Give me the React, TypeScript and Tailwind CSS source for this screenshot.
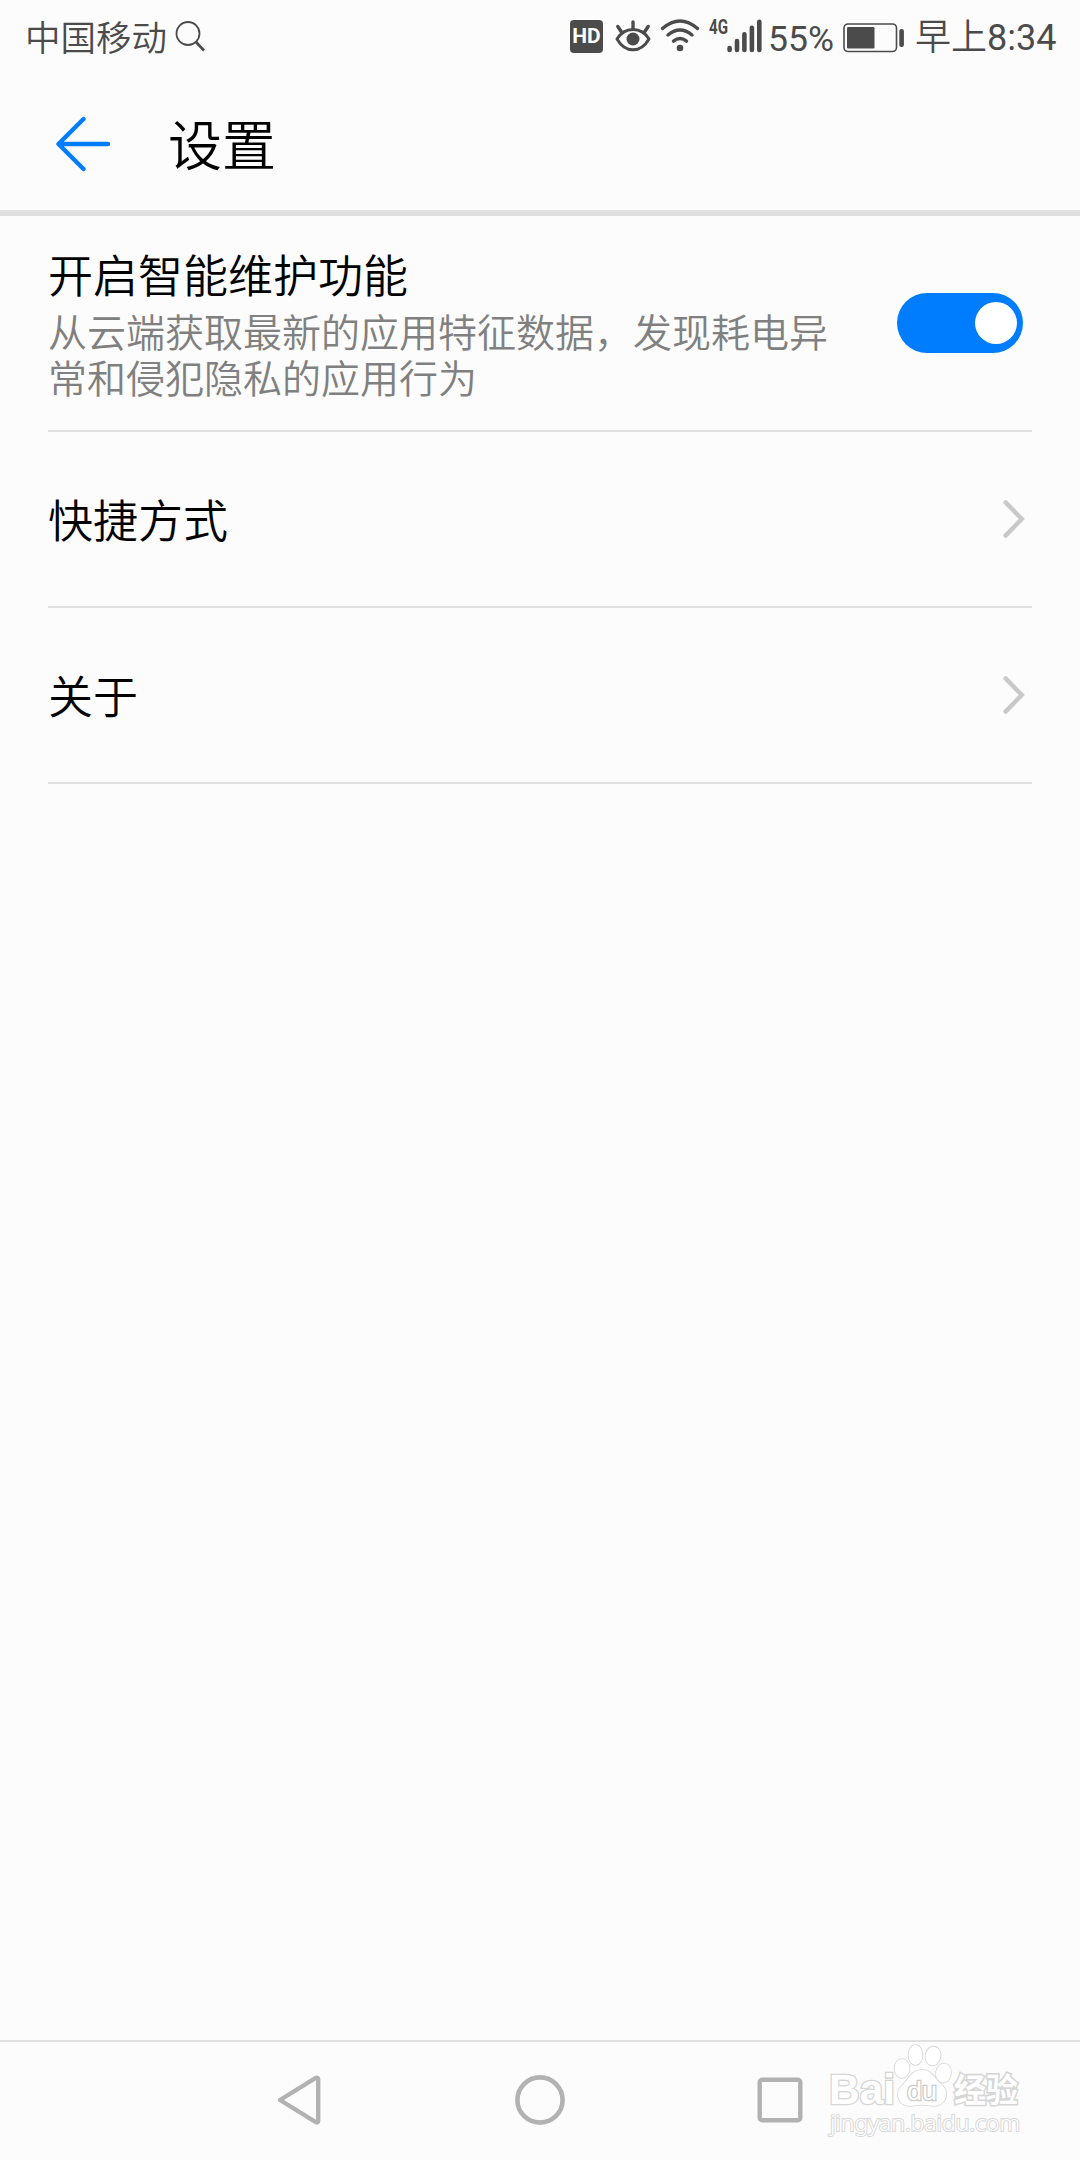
import React, { useState } from 'react';

const SearchIcon = () => (
    <svg className="w-[32px] h-[34px]" viewBox="0 0 32 34" fill="none" stroke="#4b4b4b">
        <circle cx="14" cy="14.5" r="11.5" strokeWidth="1.8" />
        <path d="M22 23 L30 31.5" strokeWidth="2.6" />
    </svg>
);

const HdIcon = () => (
    <div className="w-[33px] h-[33px] rounded-[4px] bg-[#4b4b4b] flex items-center justify-center">
        <span className="font-['Roboto',sans-serif] font-bold text-[21px] leading-none text-white pt-px">HD</span>
    </div>
);

const EyeIcon = () => (
    <svg className="w-[36px] h-[32px]" viewBox="0 0 36 32" fill="none" stroke="#4b4b4b" strokeWidth="3.4" strokeLinecap="round">
        <path d="M2 19 C6 12.5 12 9.5 18 9.5 C24 9.5 30 12.5 34 19 C30 26 24 29.8 18 29.8 C12 29.8 6 26 2 19 Z" strokeWidth="3" strokeLinejoin="round" />
        <circle cx="18" cy="19" r="6.5" fill="#4b4b4b" stroke="none" />
        <path d="M18 2 V9 M2.8 6.5 L6.5 12 M33.2 6.5 L29.5 12" />
    </svg>
);

const WifiIcon = () => (
    <svg className="w-[40px] h-[34px]" viewBox="0 0 40 34" fill="none" stroke="#4b4b4b" strokeWidth="3.4" strokeLinecap="round">
        <path d="M2.5 9.5 Q20 -5.5 37.5 9.5" />
        <path d="M8 16 Q20 6 32 16" />
        <path d="M13.5 22.2 Q20 17 26.5 22.2" />
        <circle cx="20" cy="29" r="3.3" fill="#4b4b4b" stroke="none" />
    </svg>
);

const SignalIcon = () => (
    <div className="flex items-start h-[34px]">
        <span className="w-[18px] font-['Roboto',sans-serif] font-bold text-[21px] leading-[16px] text-[#4b4b4b]">
            <span className="inline-block origin-left scale-x-[0.72]">4G</span>
        </span>
        <svg className="w-[35px] h-[34px]" viewBox="0 0 35 34" stroke="#4b4b4b" strokeWidth="4.6" strokeLinecap="round">
            <path d="M2.6 29 V31 M10 22 V31 M17.4 15.2 V31 M24.9 8.7 V31 M32.3 2.7 V31" />
        </svg>
    </div>
);

const BatteryIcon = () => (
    <svg className="w-[62px] h-[30px]" viewBox="0 0 62 30" fill="#4b4b4b">
        <rect x="1" y="1" width="52.5" height="27.5" rx="4" fill="none" stroke="#4b4b4b" strokeWidth="1.6" />
        <rect x="4" y="4" width="27.5" height="21.5" rx="1.2" />
        <rect x="56.3" y="6" width="4.6" height="18" rx="2" />
    </svg>
);

const BackArrow = () => (
    <svg className="w-[56px] h-[56px]" viewBox="0 0 56 56" fill="none" stroke="#007dff" strokeWidth="4.4" strokeLinecap="round" strokeLinejoin="round">
        <path d="M28.5 3 L3.5 28 L28.5 53 M4 28 H53" />
    </svg>
);

const Chevron = () => (
    <svg className="w-[24px] h-[40px]" viewBox="0 0 24 40" fill="none" stroke="#c9c9c9" strokeWidth="4.4" strokeLinecap="round" strokeLinejoin="miter">
        <path d="M3.6 3.4 L19.8 20 L3.6 36.6" />
    </svg>
);

const Watermark = () => (
    <svg className="absolute left-[822px] top-0 w-[210px] h-[100px]" viewBox="0 0 210 100" fill="#ffffff" stroke="#d6d6d6" strokeWidth="1.6" paintOrder="stroke">
        <text x="7" y="61.5" fontFamily="Liberation Sans" fontWeight="700" fontSize="42" strokeWidth="2.6" textLength="66" lengthAdjust="spacingAndGlyphs">Bai</text>
        <text x="132" y="60" fontFamily="Noto Sans CJK SC" fontWeight="700" fontSize="33" strokeWidth="3.2" textLength="64" lengthAdjust="spacingAndGlyphs">经验</text>
        <text x="8" y="88.5" fontFamily="Noto Sans" fontSize="21.5" stroke="#d9d9d9" strokeWidth="2" textLength="190" lengthAdjust="spacingAndGlyphs">jingyan.baidu.com</text>
        <ellipse cx="80" cy="26.5" rx="7.5" ry="9.5" />
        <ellipse cx="93.5" cy="13" rx="7" ry="10" />
        <ellipse cx="111" cy="14" rx="7.5" ry="9.5" transform="rotate(10 111 14)" />
        <ellipse cx="121.5" cy="31" rx="7.5" ry="9.5" transform="rotate(8 121.5 31)" />
        <path d="M100 28 C109 28 111 34 116 39 C121 44 125 47 124 54 C123 62 115 65 108 63.5 C103 62.5 97 62.5 92 63.5 C84 65 77 62 76 54 C75 47 80 44 84 39 C89 33 92 28 100 28 Z" />
        <text x="85" y="57.5" fontFamily="Liberation Sans" fontSize="26" stroke="#cacaca" strokeWidth="2.4" textLength="30" lengthAdjust="spacingAndGlyphs">du</text>
    </svg>
);

const links = ['快捷方式', '关于'];

export default function App() {
    const [enabled, setEnabled] = useState(true);

    return (
        <div className="w-[1080px] h-[2160px] flex flex-col bg-[#fcfcfc] text-black font-['Noto_Sans_CJK_SC',sans-serif] font-[350] overflow-hidden">
            {/* status bar */}
            <div className="h-[72px] shrink-0 flex items-center justify-between pl-[25px] pr-[23px] text-[#4b4b4b]">
                <div className="flex items-center">
                    <span className="w-[149px] text-[35.5px] leading-[72px] whitespace-nowrap">中国移动</span>
                    <SearchIcon />
                </div>
                <div className="flex items-center">
                    <HdIcon />
                    <div className="ml-[12px]"><EyeIcon /></div>
                    <div className="ml-[9px]"><WifiIcon /></div>
                    <div className="ml-[9px]"><SignalIcon /></div>
                    <span className="ml-[6px] w-[75px] font-['Roboto',sans-serif] font-normal text-[35.5px] leading-[70px] pt-[5px]">55%</span>
                    <div className="pt-[3px]"><BatteryIcon /></div>
                    <span className="ml-[10px] w-[142px] font-['Roboto','Noto_Sans_CJK_SC',sans-serif] text-[36px] font-normal leading-[70px] pt-[4px] whitespace-nowrap">
                        <span className="font-[350]">早上</span>8:34
                    </span>
                </div>
            </div>

            {/* title bar */}
            <header className="h-[144px] shrink-0 flex items-center pl-[55px] border-b-[6px] border-[#e0e0e0]">
                <button className="mt-[6px]"><BackArrow /></button>
                <h1 className="ml-[57px] mt-[4px] text-[54px] leading-[72px]">设置</h1>
            </header>

            <main className="flex-1 px-[48px]">
                <div className="h-[216px] flex items-center justify-between border-b-2 border-[#e0e0e0]">
                    <div className="w-[790px]">
                        <h2 className="-mt-[3px] mb-[3px] text-[45px] leading-[60px]">开启智能维护功能</h2>
                        <p className="w-[782px] text-[39px] leading-[46px] text-[#808080]">从云端获取最新的应用特征数据，发现耗电异常和侵犯隐私的应用行为</p>
                    </div>
                    <button
                        onClick={() => setEnabled(!enabled)}
                        className={`mr-[9px] w-[126px] h-[60px] rounded-full px-[6px] flex items-center ${enabled ? 'bg-[#007dff] justify-end' : 'bg-[#c9c9c9] justify-start'}`}
                    >
                        <span className="w-[42px] h-[42px] rounded-full bg-white" />
                    </button>
                </div>
                {links.map((label) => (
                    <div key={label} className="h-[176px] flex items-center justify-between border-b-2 border-[#e0e0e0]">
                        <span className="mb-px text-[45px] leading-[60px]">{label}</span>
                        <div className="mr-[6px]"><Chevron /></div>
                    </div>
                ))}
            </main>

            {/* navigation bar */}
            <nav className="relative h-[120px] shrink-0 flex items-center justify-center gap-[190px] pb-[2px] border-t-2 border-[#e0e0e0]">
                <svg className="w-[50px] h-[54px]" viewBox="0 0 50 54" fill="none" stroke="#b2b2b2" strokeWidth="4.4" strokeLinejoin="round">
                    <path d="M5 27 L40.8 4.8 Q43.2 4 43.2 6.4 V47.6 Q43.2 50 40.8 49.2 Z" />
                </svg>
                <svg className="w-[50px] h-[50px]" viewBox="0 0 50 50" fill="none" stroke="#b2b2b2" strokeWidth="4.6">
                    <circle cx="25" cy="25" r="22.6" />
                </svg>
                <svg className="w-[50px] h-[50px]" viewBox="0 0 50 50" fill="none" stroke="#b2b2b2" strokeWidth="4.4">
                    <rect x="4.7" y="4.7" width="40.6" height="40.6" rx="2.5" />
                </svg>
                <Watermark />
            </nav>
        </div>
    );
}
